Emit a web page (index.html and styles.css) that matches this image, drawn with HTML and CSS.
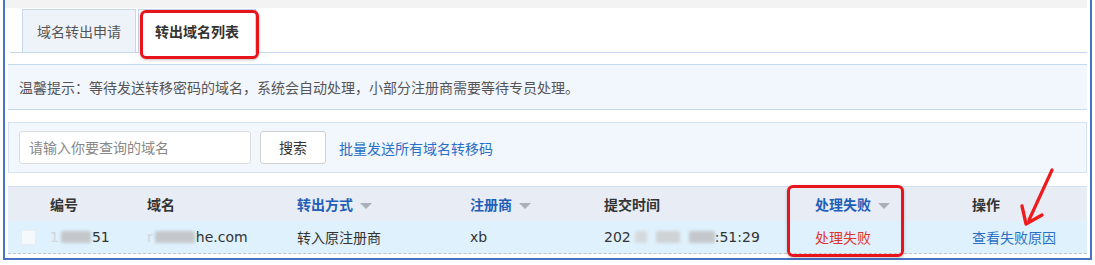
FILE: index.html
```html
<!DOCTYPE html>
<html lang="zh-CN">
<head>
<meta charset="utf-8">
<title>转出域名列表</title>
<link rel="stylesheet" href="styles.css">
</head>
<body>
<div class="frame">
  <div class="topband"></div>
  <div class="tabs">
    <div class="tab">域名转出申请</div>
    <div class="tab active">转出域名列表</div>
  </div>
  <div class="tip">温馨提示：等待发送转移密码的域名，系统会自动处理，小部分注册商需要等待专员处理。</div>
  <div class="search">
    <div class="input">请输入你要查询的域名</div>
    <div class="btn">搜索</div>
    <a class="link">批量发送所有域名转移码</a>
  </div>
  <div class="table">
    <div class="thead">
      <div class="c c0"></div>
      <div class="c">编号</div>
      <div class="c">域名</div>
      <div class="c sort">转出方式<span class="tri"></span></div>
      <div class="c sort">注册商<span class="tri"></span></div>
      <div class="c">提交时间</div>
      <div class="c sort">处理失败<span class="tri"></span></div>
      <div class="c">操作</div>
    </div>
    <div class="trow">
      <div class="c c0"><span class="chk"></span></div>
      <div class="c num"><span class="faint">1</span><span class="blur b1"></span>51</div>
      <div class="c num"><span class="faint">r</span><span class="blur b2"></span>he.com</div>
      <div class="c">转入原注册商</div>
      <div class="c num">xb</div>
      <div class="c num">202<span class="blur b3"></span><span class="blur b4"></span><span class="blur b5"></span>:51:29</div>
      <div class="c fail">处理失败</div>
      <div class="c"><a class="link">查看失败原因</a></div>
    </div>
  </div>
  <div class="mark mark-tab"></div>
  <div class="mark mark-col"></div>
  <svg class="arrow" width="50" height="70" viewBox="0 0 50 70">
    <path d="M40 4 L17 54" stroke="#ee1c1c" stroke-width="3.2" stroke-linecap="round" fill="none"/>
    <path d="M10 40 L14 58 L30 49" stroke="#ee1c1c" stroke-width="3.4" stroke-linecap="round" stroke-linejoin="round" fill="none"/>
  </svg>
</div>
</body>
</html>
```

FILE: styles.css
```css
* { box-sizing: border-box; }
html, body { margin: 0; padding: 0; background: #fff; }
body {
  font-family: "Noto Sans CJK SC", "Noto Sans", sans-serif;
  font-size: 14px;
  color: #333;
}
.frame {
  position: relative;
  margin-left: 3px;
  width: 1089px;
  height: 260px;
  border: 2px solid #4a73c5;
  border-top: 0;
  padding: 0 3px 0 0;
}
.topband { height: 8px; background: #f3f3f3; }
.tabs {
  display: flex;
  align-items: flex-end;
  height: 45px;
  margin-left: 5px;
  padding-left: 12px;
  border-bottom: 1px solid #c6d8ee;
}
.tab {
  height: 43px;
  line-height: 42px;
  width: 114px;
  text-align: center;
  background: #eef3fa;
  border: 1px solid #c8d8ec;
  border-bottom: 0;
  color: #555;
}
.tab.active {
  width: 118px;
  margin-left: 2px;
  background: #fff;
  color: #333;
  font-weight: bold;
  height: 44px;
  margin-bottom: -1px;
}
.tip {
  margin: 11px 0 0 3px;
  height: 46px;
  line-height: 44px;
  padding-left: 11px;
  background: #f2f6fd;
  border-top: 1px solid #c6d9ef;
  border-bottom: 1px solid #c6d9ef;
  color: #555;
}
.search {
  margin: 12px 0 0 3px;
  height: 51px;
  display: flex;
  align-items: center;
  padding-left: 10px;
  background: #f2f6fd;
  border: 1px solid #d6e3f3;
}
.input {
  width: 232px;
  height: 33px;
  line-height: 31px;
  padding-left: 9px;
  background: #fff;
  border: 1px solid #dcdcdc;
  border-radius: 3px;
  color: #888;
}
.btn {
  margin-left: 9px;
  width: 66px;
  height: 33px;
  line-height: 31px;
  text-align: center;
  background: #fff;
  border: 1px solid #d0d0d0;
  border-radius: 3px;
  color: #333;
}
.link { color: #2b6fc6; text-decoration: none; }
.search .link { margin-left: 13px; }
.table { margin: 13px 0 0 3px; }
.thead, .trow {
  display: grid;
  grid-template-columns: 42px 97px 150px 173px 134px 211px 157px 115px;
  align-items: center;
}
.thead {
  height: 35px;
  background: #e8ecf4;
  border-top: 1px solid #d3e0f0;
  font-weight: bold;
  color: #333;
}
.trow {
  height: 33px;
  background: #dff1fc;
  border-bottom: 1px dashed #c4c4c4;
}
.c { white-space: nowrap; }
.sort { color: #1f5fb8; }
.tri {
  display: inline-block;
  margin-left: 7px;
  vertical-align: middle;
  width: 0;
  height: 0;
  border-left: 6px solid transparent;
  border-right: 6px solid transparent;
  border-top: 6px solid #aab0ba;
}
.chk {
  display: block;
  margin-left: 13px;
  width: 15px;
  height: 15px;
  background: #f6f9fb;
  border: 1px solid #e6edf2;
  border-radius: 2px;
}
.num { font-family: "DejaVu Sans", "Noto Sans CJK SC", sans-serif; font-size: 14px; }
.faint { color: #d2d6da; }
.blur {
  display: inline-block;
  height: 12px;
  vertical-align: -1px;
  background: #c4c8cc;
  filter: blur(1.5px);
  border-radius: 2px;
}
.b1 { width: 30px; margin: 0 1px 0 2px; }
.b2 { width: 40px; margin: 0 1px 0 2px; }
.b3 { width: 12px; margin: 0 4px 0 4px; background: #d6dadd; }
.b4 { width: 24px; margin: 0 5px; background: #cfd3d6; }
.b5 { width: 26px; margin: 0 0 0 4px; }
.fail { color: #e2322f; }
.mark {
  position: absolute;
  border: 3px solid #e8141b;
  border-radius: 6px;
  box-shadow: 0 1px 3px rgba(0,0,0,0.25);
  pointer-events: none;
}
.mark-tab { left: 135px; top: 10px; width: 119px; height: 49px; }
.mark-col { left: 782px; top: 185px; width: 117px; height: 72px; }
.arrow { position: absolute; left: 1007px; top: 166px; }
```
